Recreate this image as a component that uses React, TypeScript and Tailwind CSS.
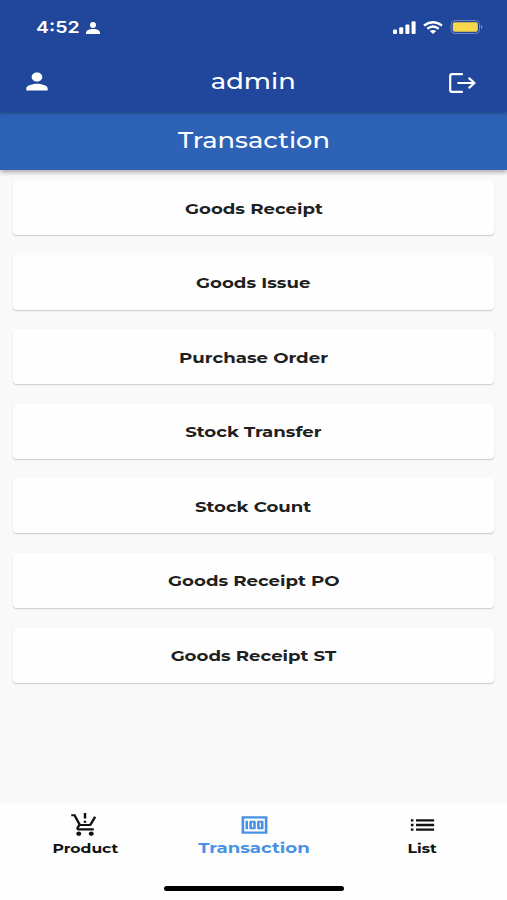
import {
  MdList,
  MdOutlineMoney,
  MdOutlineProductionQuantityLimits,
  MdPerson,
} from "react-icons/md";

const MENU_ITEMS = [
  "Goods Receipt",
  "Goods Issue",
  "Purchase Order",
  "Stock Transfer",
  "Stock Count",
  "Goods Receipt PO",
  "Goods Receipt ST",
];

const StatusBar = () => (
  <div className="flex h-[54px] items-center pl-[36px] pr-[24px] text-white">
    <span className="w-[44px] whitespace-nowrap font-['Inter',sans-serif] text-[16.5px] font-semibold leading-5">
      <span className="inline-block origin-left scale-x-[1.18]">4:52</span>
    </span>
    <svg viewBox="0 0 14 12" className="ml-[6px] mt-px h-[12px] w-[14px]" fill="currentColor">
      <circle cx="7" cy="3" r="3" />
      <path d="M0 12v-1.2C0 8.3 3.2 7 7 7s7 1.3 7 3.8V12z" />
    </svg>
    <svg viewBox="0 0 23 13" className="ml-auto h-[13px] w-[23px]" fill="currentColor">
      <rect x="0" y="8.5" width="4" height="4.5" rx="1" />
      <rect x="6.2" y="6.3" width="4" height="6.7" rx="1" />
      <rect x="12.4" y="3.5" width="4" height="9.5" rx="1" />
      <rect x="18.6" y="0.3" width="4" height="12.7" rx="1" />
    </svg>
    <svg viewBox="0 0 20 13" className="ml-[7px] h-[13px] w-[20px]" fill="none" stroke="currentColor" strokeWidth="2.4">
      <path d="M1 4.4Q10-2 19 4.4M4.3 7.8Q10 3.3 15.7 7.8" />
      <path d="M6.8 10.1Q10 7.9 13.2 10.1L10 13z" fill="currentColor" stroke="none" />
    </svg>
    <svg viewBox="0 0 33 14" className="ml-[7px] h-[14px] w-[33px]">
      <rect x="1" y="0.5" width="28.5" height="13" rx="4" fill="none" stroke="#6c83b7" />
      <rect x="2.8" y="2.3" width="25" height="9.4" rx="2" fill="#f8d84a" />
      <path d="M31 5v4q1.4-.6 1.4-2t-1.4-2" fill="#7c90be" />
    </svg>
  </div>
);

const Header = () => (
  <div className="flex h-[58px] items-center px-[21px] text-white">
    <MdPerson className="-mt-[4px] h-[27px] w-[32px]" preserveAspectRatio="none" />
    <h1 className="-mt-[3px] flex-1 pl-[5px] text-center text-[22px] font-medium leading-7">
      <span className="inline-block scale-x-[1.17]">admin</span>
    </h1>
    <svg
      viewBox="0 0 27 20"
      className="mr-[10px] h-[20px] w-[27px]"
      fill="none"
      stroke="currentColor"
      strokeWidth="2.2"
      strokeLinecap="round"
      strokeLinejoin="round"
    >
      <path d="M13 1.2H3Q1.2 1.2 1.2 3v14q0 1.8 1.8 1.8h10" />
      <path d="M9.2 10H25M20.3 5.4l5.2 4.6-5.2 4.6" />
    </svg>
  </div>
);

const TabBar = () => (
  <nav className="flex h-[69px] text-[13px] font-bold leading-4 text-[#111]">
    <div className="flex w-[170px] flex-col items-center">
      <MdOutlineProductionQuantityLimits
        className="mt-[8px] h-[26px] w-[30px]"
        preserveAspectRatio="none"
      />
      <span className="mt-[2px] scale-x-[1.2]">Product</span>
    </div>
    <div className="flex w-[168px] flex-col items-center text-[#4792e4]">
      <MdOutlineMoney className="mt-[8px] h-[26px] w-[31px]" preserveAspectRatio="none" />
      <span className="mt-[2px] scale-x-[1.21] text-[15px]">Transaction</span>
    </div>
    <div className="flex w-[169px] flex-col items-center">
      <MdList className="mt-[7px] h-[28px] w-[31px]" preserveAspectRatio="none" />
      <span className="mt-px scale-x-[1.2]">List</span>
    </div>
  </nav>
);

const App = () => {
  return (
    <div className="flex h-[900px] w-[507px] flex-col overflow-hidden bg-[#f9f9f9] font-['Montserrat','Inter',sans-serif]">
      <header className="relative z-20 h-[112px] bg-[#20479b] shadow-[0_1px_4px_rgba(0,0,0,0.35)]">
        <StatusBar />
        <Header />
      </header>
      <div className="relative z-10 flex h-[58px] items-center justify-center bg-[#2d62b7] text-[22px] font-medium text-white shadow-[0_2px_5px_rgba(0,0,0,0.35)]">
        <span className="-mt-px scale-x-[1.17]">Transaction</span>
      </div>

      <main className="flex flex-1 flex-col gap-[19.6px] px-[13px] pt-[10px]">
        {MENU_ITEMS.map((label) => (
          <button
            key={label}
            className="h-[55px] shrink-0 rounded-[4px] bg-[#fefefe] pt-[2px] text-[15px] font-bold leading-5 text-[#202020] shadow-[0_1px_1.5px_rgba(0,0,0,0.2)]"
          >
            <span className="inline-block scale-x-[1.21]">{label}</span>
          </button>
        ))}
      </main>

      <footer className="h-[96px] bg-[#fefefe]">
        <TabBar />
        <div className="mx-auto mt-[13px] h-[5px] w-[180px] rounded-full bg-black" />
      </footer>
    </div>
  );
};

export default App;
